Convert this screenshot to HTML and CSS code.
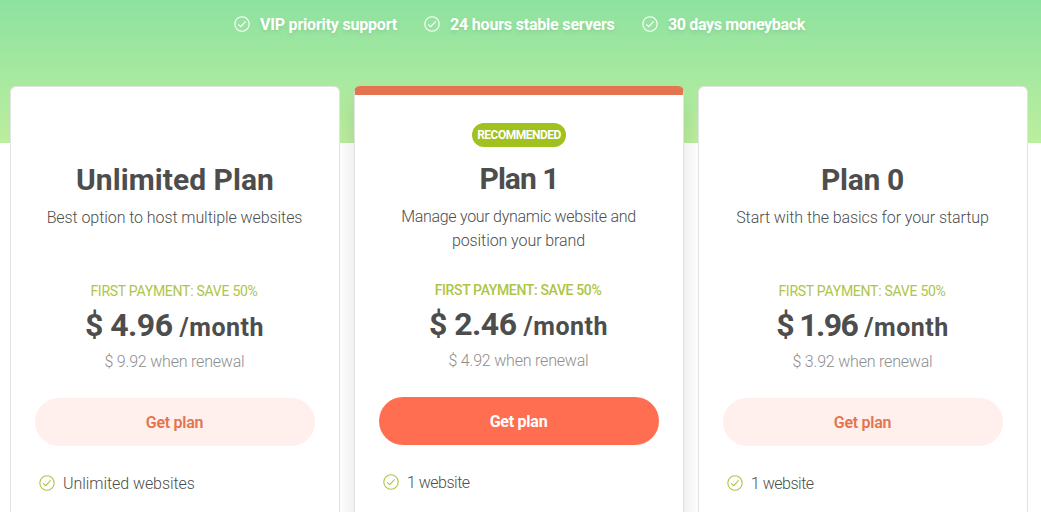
FILE: index.html
```html
<!DOCTYPE html>
<html lang="en">
<head>
<meta charset="utf-8">
<title>Hosting plans</title>
<link rel="stylesheet" href="styles.css">
</head>
<body>
<svg class="defs" width="0" height="0"><symbol id="check" viewBox="0 0 16 16"><circle cx="8" cy="8" r="7.2"/><path d="M4.2 8.3l2.5 2.4 5-5.3"/></symbol></svg>
<main class="page">
  <ul class="benefits">
    <li class="benefit benefit-vip"><svg class="check"><use href="#check"/></svg><span>VIP priority support</span></li>
    <li class="benefit benefit-servers"><svg class="check"><use href="#check"/></svg><span>24 hours stable servers</span></li>
    <li class="benefit benefit-money"><svg class="check"><use href="#check"/></svg><span>30 days moneyback</span></li>
  </ul>
  <section class="plans">
    <article class="card card-unlimited">
      <div class="label"></div>
      <h2 class="title"><span>Unlimited Plan</span></h2>
      <p class="desc"><span>Best option to host multiple websites</span></p>
      <p class="saving">FIRST PAYMENT: SAVE 50%</p>
      <p class="price"><span class="amount">$ 4.96</span><span class="period">/month</span></p>
      <p class="renewal">$ 9.92 when renewal</p>
      <a class="button">Get plan</a>
      <div class="feature"><svg class="check"><use href="#check"/></svg><span>Unlimited websites</span></div>
    </article>
    <article class="card card-featured">
      <div class="label"><span class="badge">RECOMMENDED</span></div>
      <h2 class="title"><span>Plan 1</span></h2>
      <p class="desc"><span class="desc-tight">Manage your dynamic website and</span><br><span>position your brand</span></p>
      <p class="saving">FIRST PAYMENT: SAVE 50%</p>
      <p class="price"><span class="amount">$ 2.46</span><span class="period">/month</span></p>
      <p class="renewal">$ 4.92 when renewal</p>
      <a class="button">Get plan</a>
      <div class="feature"><svg class="check"><use href="#check"/></svg><span>1 website</span></div>
    </article>
    <article class="card card-basic">
      <div class="label"></div>
      <h2 class="title"><span>Plan 0</span></h2>
      <p class="desc"><span>Start with the basics for your startup</span></p>
      <p class="saving">FIRST PAYMENT: SAVE 50%</p>
      <p class="price"><span class="amount">$ 1.96</span><span class="period">/month</span></p>
      <p class="renewal">$ 3.92 when renewal</p>
      <a class="button">Get plan</a>
      <div class="feature"><svg class="check"><use href="#check"/></svg><span>1 website</span></div>
    </article>
  </section>
</main>
</body>
</html>
```
FILE: styles.css
```css
* { box-sizing: border-box; }
body { margin: 0; overflow: hidden; background: #fff; font-family: Roboto, "Liberation Sans", sans-serif; color: #4d4d4d; }
h2, p, ul { margin: 0; padding: 0; }
.defs { display: block; }
.page {
  height: 512px;
  overflow: hidden;
  background: linear-gradient(#8de29f 0, #a5e8a0 70px, #bcee9e 143px) 0 0 / 100% 143px no-repeat;
}
.check { display: block; flex: none; width: 16px; height: 16px; fill: none; stroke: currentColor; stroke-width: 1.1; overflow: visible; }

.benefits { display: flex; height: 86px; padding: 12px 0 0 234px; list-style: none; color: #fff; }
.benefit { display: flex; align-items: center; gap: 10px; height: 24px; font-size: 16px; font-weight: 700; white-space: nowrap; text-shadow: 0 2px 4px rgba(0, 0, 0, .1); }
.benefit-vip { width: 190px; letter-spacing: -.2px; }
.benefit-servers { width: 218px; letter-spacing: -.19px; }
.benefit-money { letter-spacing: -.36px; }

.plans { display: flex; gap: 14px; padding-left: 10px; }
.card {
  display: flex; flex-direction: column; align-items: stretch;
  z-index: 1; width: 330px; height: 450px; padding: 37px 24px 0;
  border: 1px solid #e2e2e2; border-radius: 6px 6px 0 0;
  background: #fff; text-align: center; white-space: nowrap;
}
.card-featured { z-index: 0; padding-top: 28px; border-top: 9px solid #e4744f; box-shadow: 0 16px 22px rgba(0, 0, 0, .12); }
.label { display: flex; justify-content: center; height: 36px; }
.badge { width: 94px; height: 24px; border-radius: 12px; background: #a1c11f; color: #fff; font-size: 12px; font-weight: 700; line-height: 25px; letter-spacing: -.5px; }
.title { height: 40px; font-size: 30px; font-weight: 700; line-height: 40px; letter-spacing: .05px; }
.card-featured .title { line-height: 39px; letter-spacing: -1px; }
.card-basic .title { padding-right: 1px; letter-spacing: -.3px; }
.desc { height: 80px; padding: 6px 1px 0 0; font-size: 16px; font-weight: 300; line-height: 24px; letter-spacing: -.08px; }
.desc-tight { letter-spacing: -.29px; }
.saving { height: 23px; padding-right: 2px; font-size: 14px; line-height: 22px; color: #adc546; letter-spacing: -.26px; }
.card-featured .saving { font-weight: 500; letter-spacing: -.36px; }
.price { display: flex; justify-content: center; align-items: baseline; gap: 7px; height: 48px; padding-right: 1px; font-weight: 700; line-height: 45px; }
.amount { font-size: 32px; letter-spacing: -.5px; }
.period { font-size: 25px; letter-spacing: .5px; }
.card-basic .amount { letter-spacing: -1.6px; }
.card-basic .price { gap: 7px; }
.renewal { height: 24px; padding-right: 1px; font-size: 16px; font-weight: 300; line-height: 22px; color: #8e8e8e; letter-spacing: -.2px; }
.button { display: block; height: 48px; margin-top: 23px; padding-right: 1px; border-radius: 24px; background: #ffefed; color: #e4744f; font-size: 16px; font-weight: 600; line-height: 50px; letter-spacing: -.25px; }
.card-featured .button { background: #ff6e50; color: #fff; font-weight: 700; }
.feature { display: flex; align-items: center; gap: 8px; height: 24px; margin: 25px 0 0 4px; font-size: 16px; font-weight: 300; letter-spacing: -.06px; }
.card-featured .feature, .card-basic .feature { letter-spacing: -.5px; }
.feature .check { color: #adc546; }
```
